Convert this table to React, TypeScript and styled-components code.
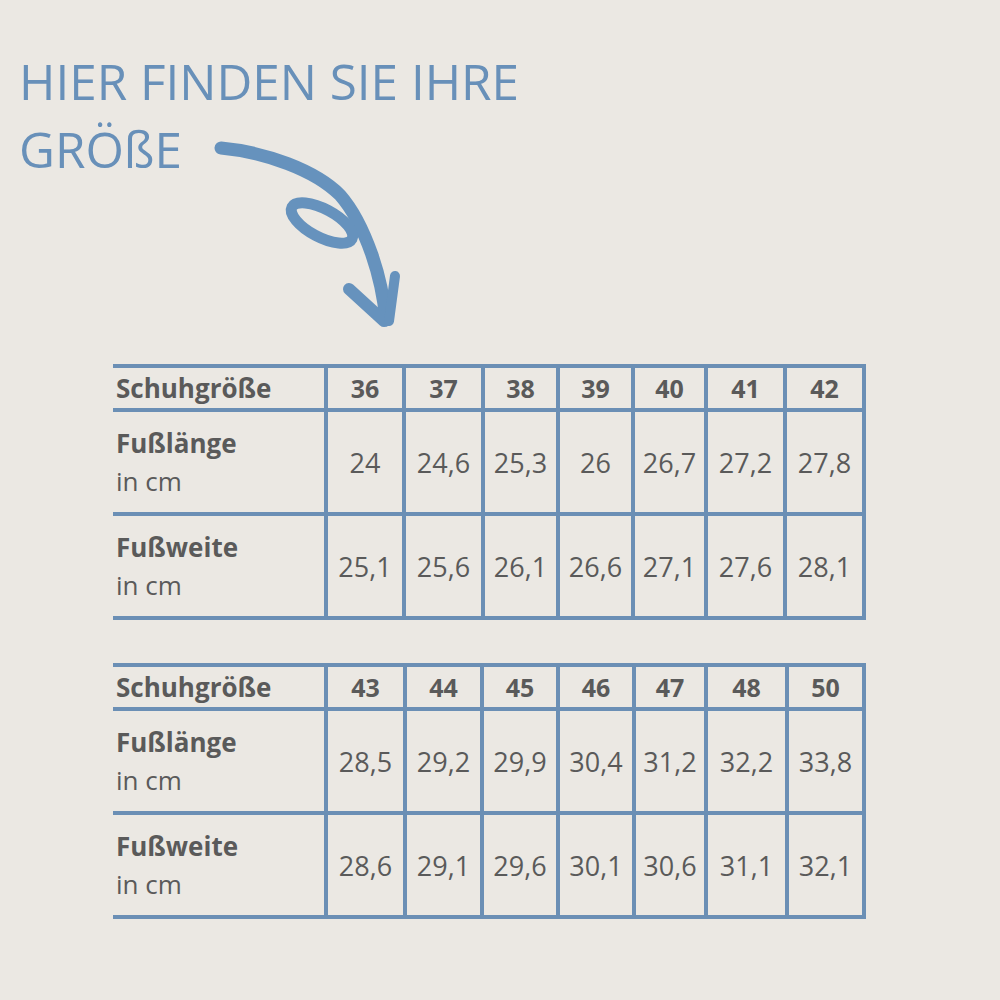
import React from "react";
import styled, { createGlobalStyle } from "styled-components";

const BG = "#ebe8e3";
const LINE = "#6b8fb5";
const BLUE = "#6890b9";
const TEXT = "#5a5a5a";

const Global = createGlobalStyle`
  html, body {
    margin: 0;
    padding: 0;
    background: ${BG};
  }
  body {
    font-family: "Open Sans", "Noto Sans", sans-serif;
    width: 1000px;
    height: 1000px;
    overflow: hidden;
  }
`;

const Page = styled.div`
  width: 1000px;
  height: 1000px;
  box-sizing: border-box;
  padding-top: 47px;
  background: ${BG};
  display: flex;
  flex-direction: column;
`;

const Header = styled.header`
  display: flex;
  flex-direction: column;
  margin-left: 19px;
  color: ${BLUE};
  font-size: 49.4px;
  line-height: 68px;
  font-weight: 400;
`;

const TitleLine = styled.div`
  white-space: nowrap;
`;

const TitleRow = styled.div`
  display: flex;
  align-items: flex-start;
`;

const TitleWord = styled.span`
  flex: none;
  width: 181px;
  white-space: nowrap;
`;

const ArrowSvg = styled.svg`
  flex: none;
  margin-top: 15px;
  display: block;
`;

const Tables = styled.div`
  display: flex;
  flex-direction: column;
  gap: 43px;
  margin-left: 113px;
  margin-top: 29px;
`;

const Grid = styled.div<{ $cols: string }>`
  display: grid;
  width: 753px;
  box-sizing: border-box;
  grid-template-columns: ${(p) => p.$cols};
  grid-template-rows: 40px 100px 100px;
  gap: 4px;
  padding: 4px 4px 4px 0;
  background: ${LINE};
`;

const Cell = styled.div<{ $head?: boolean }>`
  background: ${BG};
  color: ${TEXT};
  display: flex;
  align-items: center;
  justify-content: center;
  font-size: ${(p) => (p.$head ? "25px" : "27px")};
  font-weight: ${(p) => (p.$head ? 700 : 400)};
  white-space: nowrap;
`;

const LabelCell = styled.div`
  background: ${BG};
  color: ${TEXT};
  display: flex;
  flex-direction: column;
  justify-content: center;
  padding-left: 3px;
  font-size: 26px;
  line-height: 38px;
`;

const HeadLabel = styled.div`
  background: ${BG};
  color: ${TEXT};
  display: flex;
  align-items: center;
  padding-left: 3px;
  font-size: 26px;
  font-weight: 700;
`;

const Strong = styled.span`
  font-weight: 700;
`;

const Unit = styled.span`
  font-weight: 400;
`;

type TableData = {
  cols: string;
  sizes: string[];
  length: string[];
  width: string[];
};

const tables: TableData[] = [
  {
    cols: "211px 74px 75px 71px 71px 69px 75px 75px",
    sizes: ["36", "37", "38", "39", "40", "41", "42"],
    length: ["24", "24,6", "25,3", "26", "26,7", "27,2", "27,8"],
    width: ["25,1", "25,6", "26,1", "26,6", "27,1", "27,6", "28,1"],
  },
  {
    cols: "211px 75px 73px 72px 72px 68px 77px 73px",
    sizes: ["43", "44", "45", "46", "47", "48", "50"],
    length: ["28,5", "29,2", "29,9", "30,4", "31,2", "32,2", "33,8"],
    width: ["28,6", "29,1", "29,6", "30,1", "30,6", "31,1", "32,1"],
  },
];

function SizeTable({ data }: { data: TableData }) {
  return (
    <Grid $cols={data.cols}>
      <HeadLabel>Schuhgröße</HeadLabel>
      {data.sizes.map((s) => (
        <Cell $head key={"s" + s}>
          {s}
        </Cell>
      ))}
      <LabelCell>
        <Strong>Fußlänge</Strong>
        <Unit>in cm</Unit>
      </LabelCell>
      {data.length.map((v, i) => (
        <Cell key={"l" + i}>{v}</Cell>
      ))}
      <LabelCell>
        <Strong>Fußweite</Strong>
        <Unit>in cm</Unit>
      </LabelCell>
      {data.width.map((v, i) => (
        <Cell key={"w" + i}>{v}</Cell>
      ))}
    </Grid>
  );
}

function Arrow() {
  return (
    <ArrowSvg width="210" height="205" viewBox="200 130 210 205">
      <g fill="none" stroke="#6692bd" strokeLinecap="round" strokeLinejoin="round">
        <path
          d="M221,148 C265,152 315,170 340,195 C355,212 365,235 372,255 C380,278 384,300 386,320"
          strokeWidth="13"
        />
        <ellipse cx="322" cy="223" rx="34" ry="14" transform="rotate(28 322 223)" strokeWidth="11" />
        <path d="M349,289 L384,321" strokeWidth="12" />
        <path d="M395,276 L389,321" strokeWidth="10" />
      </g>
    </ArrowSvg>
  );
}

export default function App() {
  return (
    <Page>
      <Global />
      <Header>
        <TitleLine>HIER FINDEN SIE IHRE</TitleLine>
        <TitleRow>
          <TitleWord>GRÖßE</TitleWord>
          <Arrow />
        </TitleRow>
      </Header>
      <Tables>
        {tables.map((t, i) => (
          <SizeTable key={i} data={t} />
        ))}
      </Tables>
    </Page>
  );
}
